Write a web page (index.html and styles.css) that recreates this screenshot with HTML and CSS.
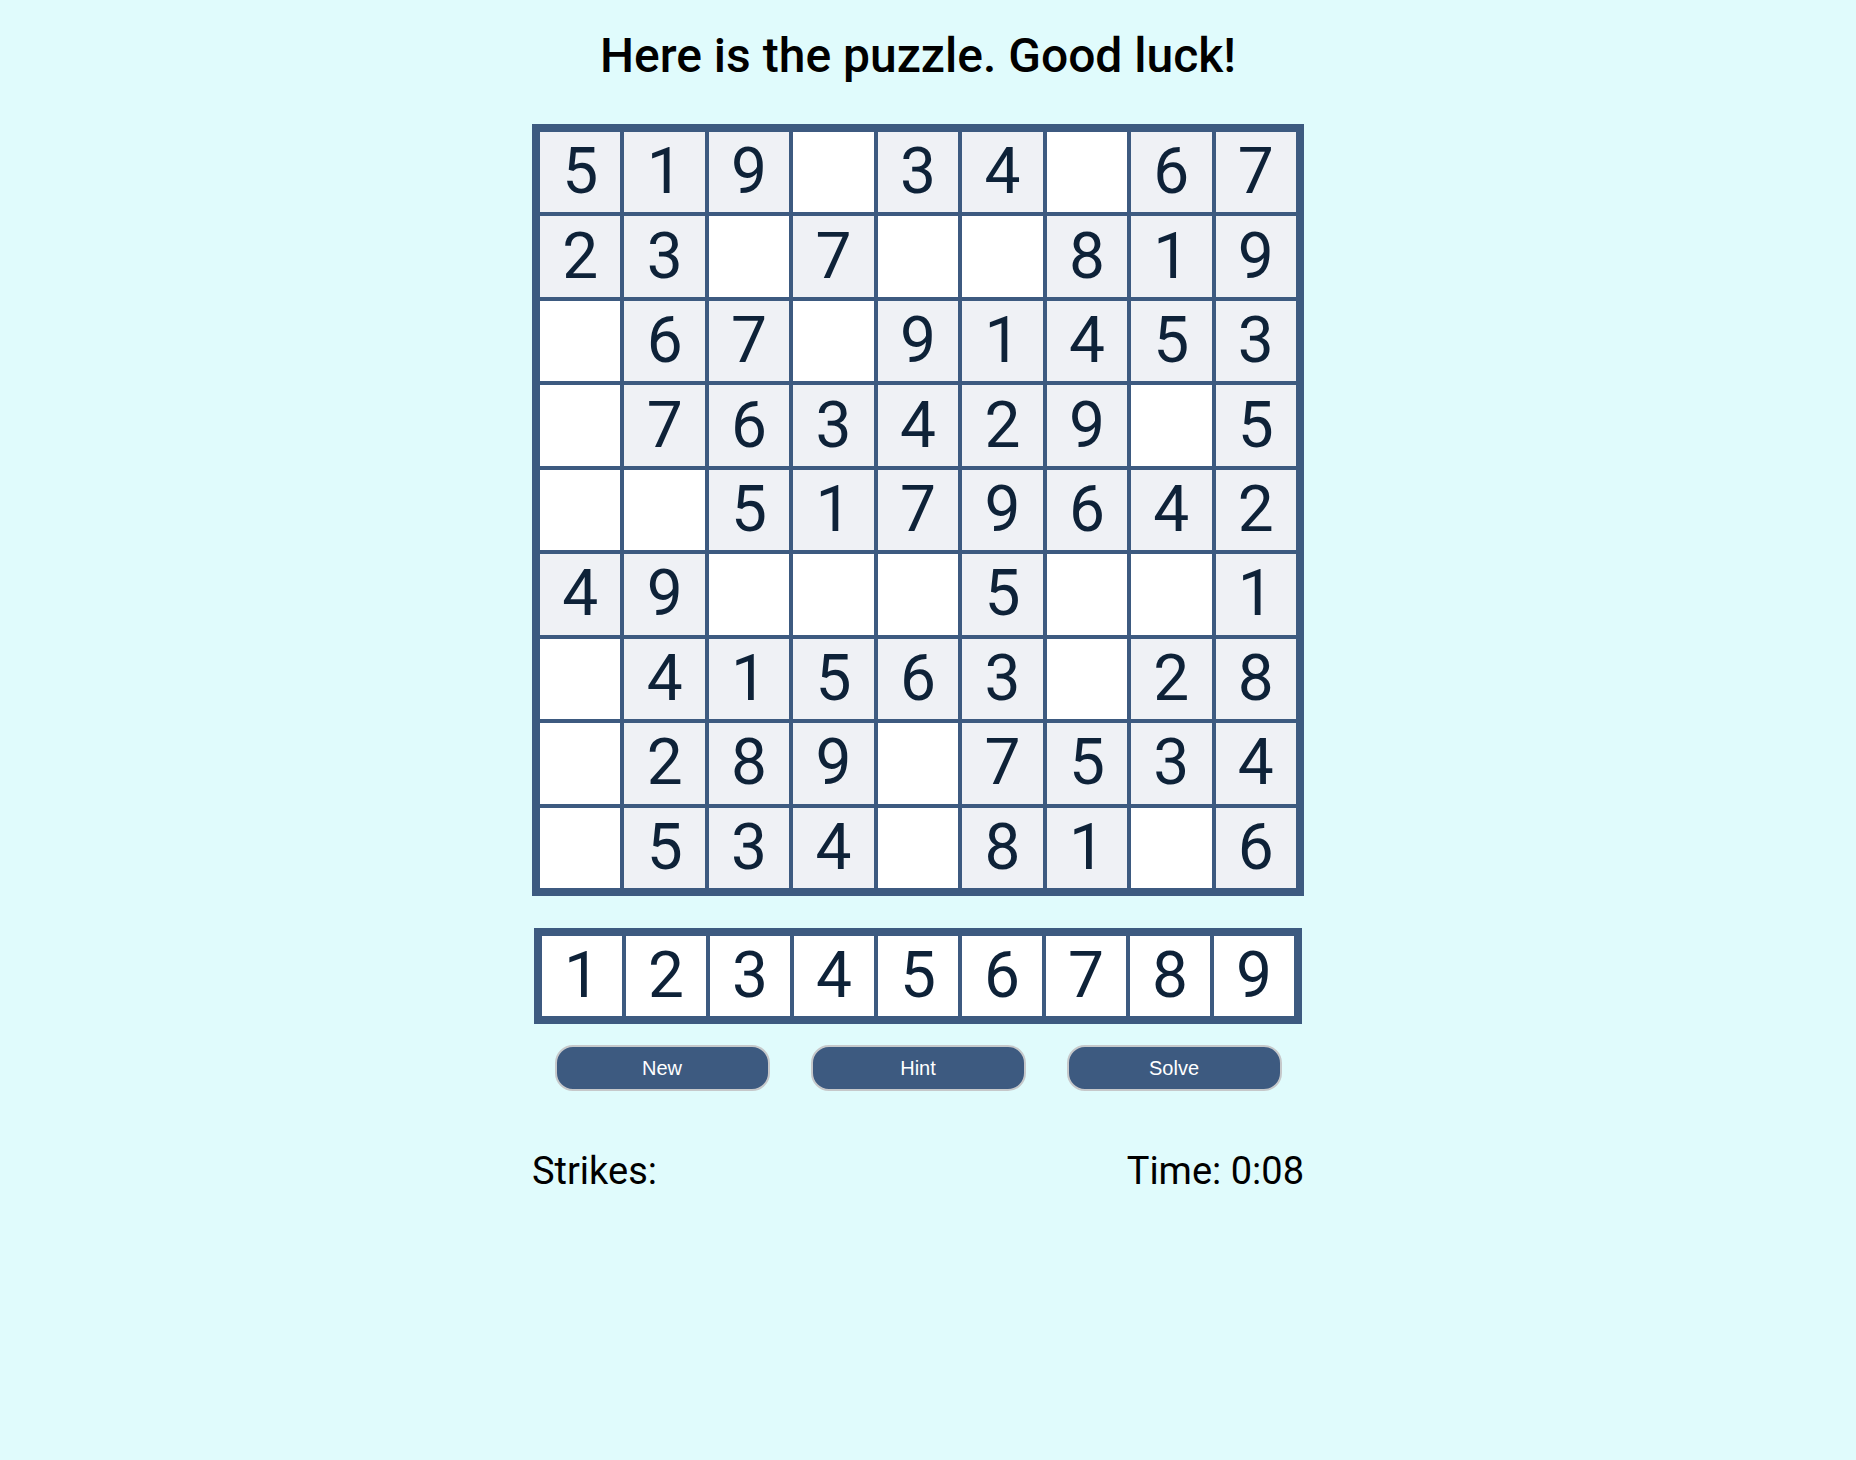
FILE: index.html
```html
<!DOCTYPE html>
<html lang="en">
<head>
<meta charset="utf-8">
<title>Sudoku</title>
<link rel="stylesheet" href="styles.css">
</head>
<body>
<div class="page">
  <h1 class="title">Here is the puzzle. Good luck!</h1>
  <div class="board">
    <div class="cell given">5</div><div class="cell given">1</div><div class="cell given">9</div><div class="cell"></div><div class="cell given">3</div><div class="cell given">4</div><div class="cell"></div><div class="cell given">6</div><div class="cell given">7</div>
    <div class="cell given">2</div><div class="cell given">3</div><div class="cell"></div><div class="cell given">7</div><div class="cell"></div><div class="cell"></div><div class="cell given">8</div><div class="cell given">1</div><div class="cell given">9</div>
    <div class="cell"></div><div class="cell given">6</div><div class="cell given">7</div><div class="cell"></div><div class="cell given">9</div><div class="cell given">1</div><div class="cell given">4</div><div class="cell given">5</div><div class="cell given">3</div>
    <div class="cell"></div><div class="cell given">7</div><div class="cell given">6</div><div class="cell given">3</div><div class="cell given">4</div><div class="cell given">2</div><div class="cell given">9</div><div class="cell"></div><div class="cell given">5</div>
    <div class="cell"></div><div class="cell"></div><div class="cell given">5</div><div class="cell given">1</div><div class="cell given">7</div><div class="cell given">9</div><div class="cell given">6</div><div class="cell given">4</div><div class="cell given">2</div>
    <div class="cell given">4</div><div class="cell given">9</div><div class="cell"></div><div class="cell"></div><div class="cell"></div><div class="cell given">5</div><div class="cell"></div><div class="cell"></div><div class="cell given">1</div>
    <div class="cell"></div><div class="cell given">4</div><div class="cell given">1</div><div class="cell given">5</div><div class="cell given">6</div><div class="cell given">3</div><div class="cell"></div><div class="cell given">2</div><div class="cell given">8</div>
    <div class="cell"></div><div class="cell given">2</div><div class="cell given">8</div><div class="cell given">9</div><div class="cell"></div><div class="cell given">7</div><div class="cell given">5</div><div class="cell given">3</div><div class="cell given">4</div>
    <div class="cell"></div><div class="cell given">5</div><div class="cell given">3</div><div class="cell given">4</div><div class="cell"></div><div class="cell given">8</div><div class="cell given">1</div><div class="cell"></div><div class="cell given">6</div>
  </div>
  <div class="pad">
    <div class="key">1</div><div class="key">2</div><div class="key">3</div><div class="key">4</div><div class="key">5</div><div class="key">6</div><div class="key">7</div><div class="key">8</div><div class="key">9</div>
  </div>
  <div class="actions">
    <button class="btn">New</button>
    <button class="btn">Hint</button>
    <button class="btn">Solve</button>
  </div>
  <div class="status">
    <span class="strikes">Strikes:</span>
    <span class="time">Time: 0:08</span>
  </div>
</div>
</body>
</html>
```

FILE: styles.css
```css
html, body {
  margin: 0;
  padding: 0;
  background: #e0fbfc;
}

body {
  font-family: Roboto, "Liberation Sans", sans-serif;
  color: #000;
  min-height: 1460px;
}

.page {
  display: flex;
  flex-direction: column;
  align-items: center;
  padding-right: 20px;
}

.title {
  margin: 28px 0 40px;
  font-size: 48px;
  line-height: 56px;
  font-weight: 500;
}

.board {
  width: 756px;
  height: 756px;
  border: 8px solid #3d5a80;
  background: #3d5a80;
  display: grid;
  grid-template-columns: repeat(9, 1fr);
  grid-template-rows: repeat(9, 1fr);
  gap: 4px;
}

.cell {
  background: #ffffff;
  display: flex;
  align-items: center;
  justify-content: center;
  font-size: 64px;
  color: #0e2238;
  line-height: 1;
}

.cell.given {
  background: #eff1f5;
}

.pad {
  margin-top: 32px;
  border: 8px solid #3d5a80;
  background: #3d5a80;
  display: grid;
  grid-template-columns: repeat(9, 80px);
  grid-auto-rows: 80px;
  gap: 4px;
}

.key {
  background: #ffffff;
  display: flex;
  align-items: center;
  justify-content: center;
  font-size: 64px;
  color: #0e2238;
  line-height: 1;
}

.actions {
  margin-top: 21px;
  display: flex;
  gap: 41px;
}

.btn {
  width: 215px;
  height: 46px;
  border: 2px solid #c6c8ca;
  border-radius: 18px;
  background: #3d5a80;
  color: #ffffff;
  font-family: "Liberation Sans", Arial, sans-serif;
  font-size: 20px;
  padding: 0;
}

.status {
  width: 772px;
  margin-top: 58px;
  display: flex;
  justify-content: space-between;
  font-size: 38px;
  line-height: 45px;
}
```
